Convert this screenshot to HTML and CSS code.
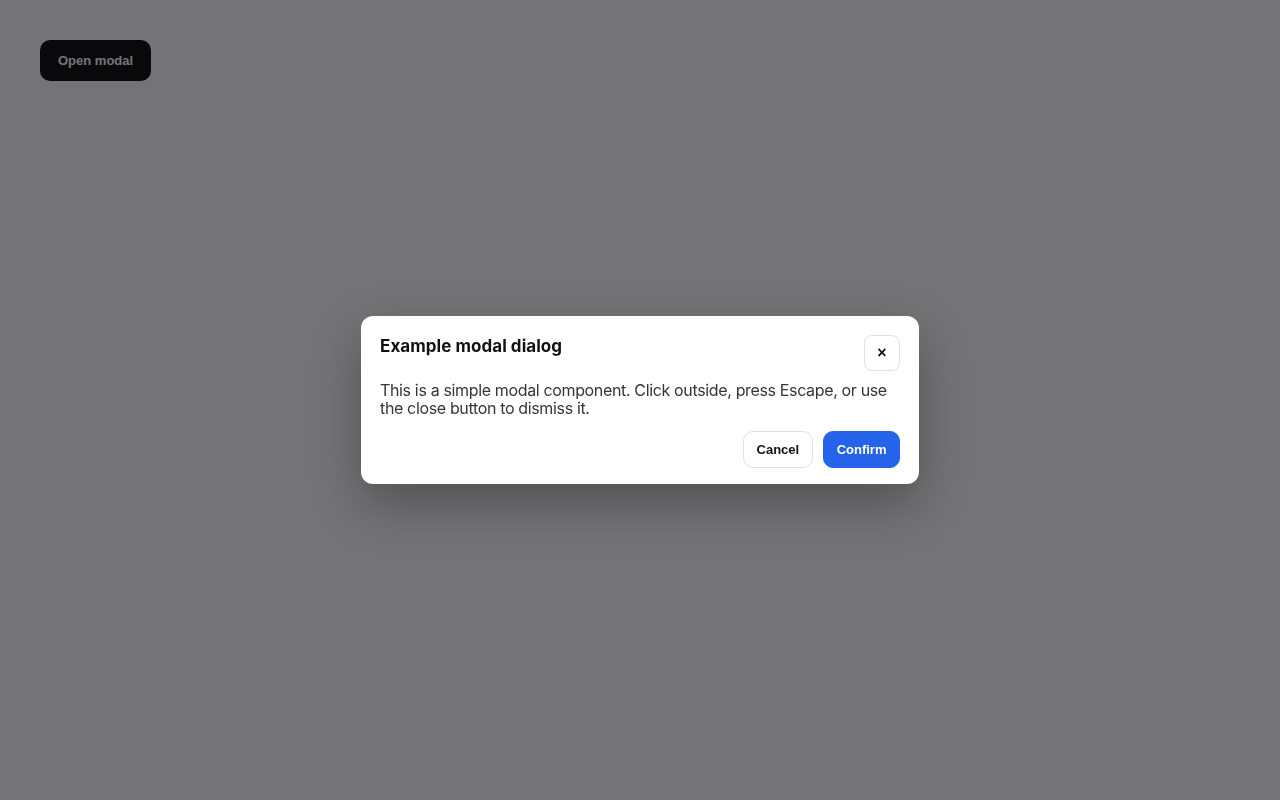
FILE: index.html
```html
<!DOCTYPE html>
<html lang="en">
<head>
<meta charset="utf-8">
<title>Modal</title>
<link rel="stylesheet" href="styles.css">
</head>
<body>
<main class="page">
  <button class="open-btn" type="button">Open modal</button>
</main>
<div class="overlay">
  <div class="modal" role="dialog" aria-modal="true" aria-labelledby="modal-title">
    <div class="modal-header">
      <h2 id="modal-title" class="modal-title">Example modal dialog</h2>
      <button class="close-btn" type="button" aria-label="Close">×</button>
    </div>
    <p class="modal-body">This is a simple modal component. Click outside, press Escape, or use the close button to dismiss it.</p>
    <div class="modal-actions">
      <button class="btn btn-secondary" type="button">Cancel</button>
      <button class="btn btn-primary" type="button">Confirm</button>
    </div>
  </div>
</div>
</body>
</html>
```
FILE: styles.css
```css
* { box-sizing: border-box; }
html, body { margin: 0; height: 100%; }
body {
  background: #ffffff;
  font-family: Inter, "Liberation Sans", sans-serif;
}
.page { padding: 40px; }
.open-btn {
  height: 41px;
  padding: 0 18px;
  border: none;
  border-radius: 10px;
  background: #000000;
  color: #ffffff;
  font-family: "Liberation Sans", Arial, sans-serif;
  font-weight: 700;
  font-size: 13px;
}
.overlay {
  position: fixed;
  inset: 0;
  background: rgba(15, 15, 20, 0.58);
  display: flex;
  align-items: center;
  justify-content: center;
}
.modal {
  width: 558px;
  background: #ffffff;
  border-radius: 12px;
  padding: 19px 19px 16px 19px;
  box-shadow: 0 20px 50px rgba(0, 0, 0, 0.3);
}
.modal-header {
  display: flex;
  justify-content: space-between;
  align-items: flex-start;
}
.modal-title {
  margin: 0;
  font-size: 17px;
  font-weight: 700;
  line-height: 22px;
  color: #111111;
  letter-spacing: 0.05px;
}
.close-btn {
  width: 36px;
  height: 36px;
  border: 1px solid #e2e2e2;
  border-radius: 8px;
  background: #ffffff;
  color: #111111;
  font-family: "Liberation Sans", Arial, sans-serif;
  font-weight: 700;
  font-size: 16px;
  padding: 0;
  display: flex;
  align-items: center;
  justify-content: center;
}
.modal-body {
  margin: 10px 0 14px;
  font-size: 16px;
  line-height: 18px;
  letter-spacing: -0.35px;
  color: #363636;
}
.modal-actions {
  display: flex;
  justify-content: flex-end;
  gap: 10px;
}
.btn {
  height: 37px;
  padding: 0 13px;
  border-radius: 10px;
  font-family: "Liberation Sans", Arial, sans-serif;
  font-weight: 700;
  font-size: 13px;
}
.btn-secondary {
  background: #ffffff;
  border: 1px solid #e2e2e2;
  color: #111111;
}
.btn-primary {
  background: #2563eb;
  border: 1px solid #2563eb;
  color: #ffffff;
  padding: 0 12.5px;
}
```
